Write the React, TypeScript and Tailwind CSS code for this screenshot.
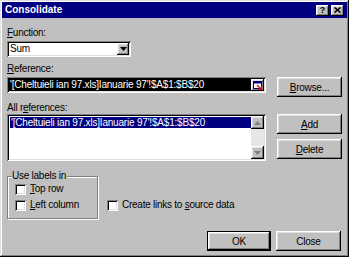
import React from "react";

const raised =
  "bg-[#c0c0c0] shadow-[inset_-1px_-1px_#000,inset_1px_1px_#fff,inset_-2px_-2px_#808080,inset_2px_2px_#dfdfdf]";
const sunken =
  "bg-white shadow-[inset_1px_1px_#808080,inset_-1px_-1px_#fff,inset_2px_2px_#000,inset_-2px_-2px_#dfdfdf]";

function Btn({ children, className = "" }: { children: React.ReactNode; className?: string }) {
  return (
    <div className={`${raised} h-[20px] flex items-center justify-center ${className}`}>
      {children}
    </div>
  );
}

function Check({ children }: { children: React.ReactNode }) {
  return (
    <div className="flex items-center h-[14px]">
      <div className={`w-[11px] h-[11px] shrink-0 ${sunken}`} />
      <span className="ml-[4px] leading-[12px]">{children}</span>
    </div>
  );
}

function Arrow({ up }: { up?: boolean }) {
  return (
    <svg width="7" height="4" viewBox="0 0 7 4">
      <polygon points={up ? "3.5,0 7,4 0,4" : "0,0 7,0 3.5,4"} fill="#808080" />
    </svg>
  );
}

export default function App() {
  const ref = "'[Cheltuieli ian 97.xls]Ianuarie 97'!$A$1:$B$20";

  return (
    <div className="w-[349px] h-[257px] bg-[#c0c0c0] p-[2px] flex flex-col text-[10px] text-black font-['Liberation_Sans',Arial,sans-serif] shadow-[inset_-1px_-1px_#000,inset_1px_1px_#dfdfdf,inset_-2px_-2px_#808080,inset_2px_2px_#fff] overflow-hidden">
      {/* title bar */}
      <div className="h-[16px] bg-[#000080] flex items-center justify-between pl-[3px] pr-[3px]">
        <span className="text-white font-bold text-[10px] leading-[12px]">Consolidate</span>
        <div className="flex gap-[2px]">
          <div className={`${raised} w-[13px] h-[11px] flex items-center justify-center`}>
            <span className="font-bold text-[9px] leading-[9px]">?</span>
          </div>
          <div className={`${raised} w-[13px] h-[11px] flex items-center justify-center`}>
            <svg width="7" height="6" viewBox="0 0 7 6">
              <path d="M0.5 0.5 L6.5 5.5 M6.5 0.5 L0.5 5.5" stroke="#000" strokeWidth="1.6" />
            </svg>
          </div>
        </div>
      </div>

      {/* body */}
      <div className="flex flex-col pl-[5px] pr-[5px] tracking-[-0.25px]">
        <div className="mt-[9px] h-[12px] leading-[12px]">
          <span className="underline underline-offset-[1px]">F</span>unction:
        </div>
        <div className={`mt-[2px] w-[124px] h-[16px] ${sunken} flex items-center justify-between pl-[3px] pr-[2px]`}>
          <span className="leading-[12px]">Sum</span>
          <div className={`${raised} w-[12px] h-[12px] flex items-center justify-center`}>
            <svg width="7" height="4" viewBox="0 0 7 4">
              <polygon points="0,0 7,0 3.5,4" fill="#000" />
            </svg>
          </div>
        </div>

        <div className="mt-[6px] h-[12px] leading-[12px]">
          <span className="underline underline-offset-[1px]">R</span>eference:
        </div>
        <div className="mt-[2px] flex items-start gap-[11px]">
          <div className={`w-[259px] h-[16px] ${sunken} flex items-center p-[2px]`}>
            <div className="flex-1 h-[12px] bg-black text-white tracking-[-0.2px] leading-[12px] pl-[1px] overflow-hidden whitespace-nowrap">
              {ref}
            </div>
            <div className={`${raised} w-[13px] h-[12px] flex items-center justify-center shrink-0`}>
              <svg width="10" height="9" viewBox="0 0 10 9">
                <rect x="0.5" y="0.5" width="8" height="7" fill="#fff" stroke="#000080" />
                <rect x="0.5" y="0.5" width="8" height="2" fill="#000080" />
                <path d="M4 4 L8.5 8.5 M8.5 5 L8.5 8.5 L5 8.5" stroke="#e00000" strokeWidth="1.3" fill="none" />
              </svg>
            </div>
          </div>
          <Btn className="w-[65px] h-[19px]">
            <span>
              <span className="underline underline-offset-[1px]">B</span>rowse...
            </span>
          </Btn>
        </div>

        <div className="mt-[5px] h-[12px] leading-[12px]">
          All r<span className="underline underline-offset-[1px]">e</span>ferences:
        </div>
        <div className="flex items-start gap-[11px]">
          <div className={`w-[259px] h-[47px] ${sunken} flex p-[2px]`}>
            <div className="flex-1 pt-[1px] pl-[1px]">
              <div className="h-[11px] bg-[#000080] text-white tracking-[-0.2px] leading-[11px] pl-[1px] whitespace-nowrap">
                {ref}
              </div>
            </div>
            <div className="w-[13px] flex flex-col bg-[#e6e6e6]">
              <div className={`${raised} h-[13px] flex items-center justify-center`}>
                <Arrow up />
              </div>
              <div className="flex-1" />
              <div className={`${raised} h-[13px] flex items-center justify-center`}>
                <Arrow />
              </div>
            </div>
          </div>
          <div className="flex flex-col gap-[5px]">
            <Btn className="w-[65px]">
              <span>
                <span className="underline underline-offset-[1px]">A</span>dd
              </span>
            </Btn>
            <Btn className="w-[65px]">
              <span>
                <span className="underline underline-offset-[1px]">D</span>elete
              </span>
            </Btn>
          </div>
        </div>

        <div className="mt-[9px] flex items-end">
          <fieldset className="w-[91px] h-[49px] border border-[#808080] shadow-[inset_1px_1px_#fff,1px_1px_#fff] pl-[7px] pb-[5px]">
            <legend className="leading-[12px] bg-[#c0c0c0] -ml-[3px] pr-[1px]">Use labels in</legend>
            <Check>
              <span className="underline underline-offset-[1px]">T</span>op row
            </Check>
            <div className="mt-[2px]">
              <Check>
                <span className="underline underline-offset-[1px]">L</span>eft column
              </Check>
            </div>
          </fieldset>
          <div className="ml-[9px] mb-[7px]">
            <Check>
              Create links to <span className="underline underline-offset-[1px]">s</span>ource data
            </Check>
          </div>
        </div>

        <div className="mt-[12px] flex justify-end gap-[5px] pr-[1px]">
          <div className="w-[64px] h-[20px] border border-black">
            <div className={`${raised} w-full h-full flex items-center justify-center`}>OK</div>
          </div>
          <Btn className="w-[65px]">Close</Btn>
        </div>
      </div>
    </div>
  );
}
